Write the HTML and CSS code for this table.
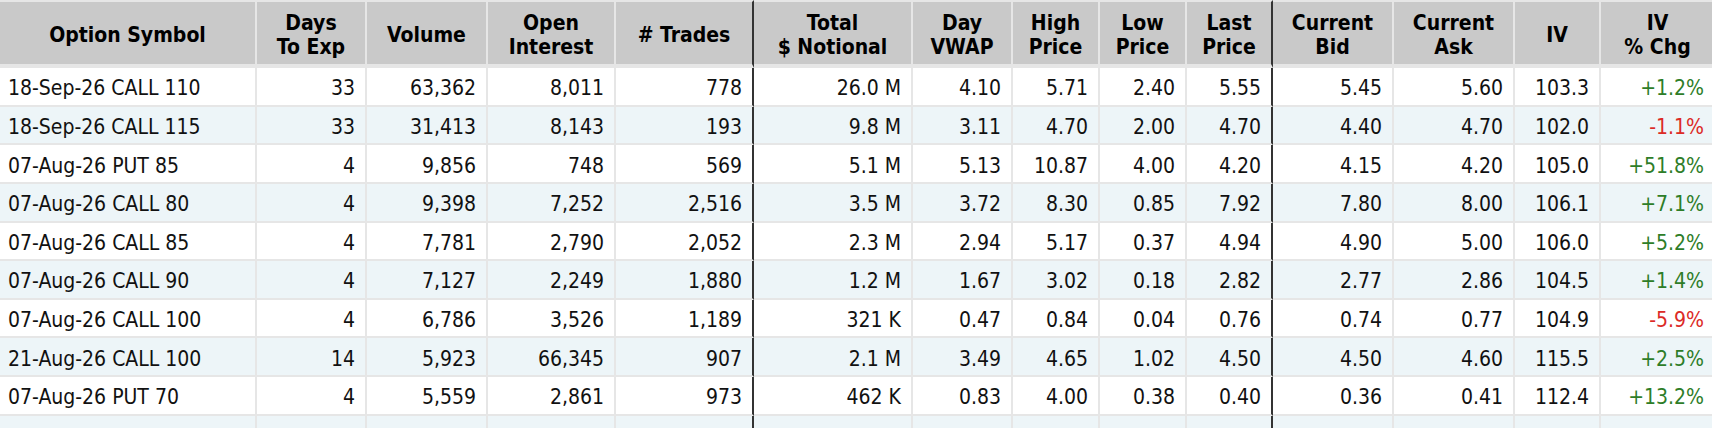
FILE: index.html
```html
<!DOCTYPE html>
<html lang="en">
<head>
<meta charset="utf-8">
<title>Options Activity</title>
<link rel="stylesheet" href="styles.css">
</head>
<body>
<table class="grid">
  <thead>
    <tr>
      <th class="c-sym">Option Symbol</th>
      <th class="c-days">Days<br>To Exp</th>
      <th class="c-vol">Volume</th>
      <th class="c-oi">Open<br>Interest</th>
      <th class="c-trades sep">#&nbsp;Trades</th>
      <th class="c-not">Total<br>$ Notional</th>
      <th class="c-vwap">Day<br>VWAP</th>
      <th class="c-high">High<br>Price</th>
      <th class="c-low">Low<br>Price</th>
      <th class="c-last sep">Last<br>Price</th>
      <th class="c-bid">Current<br>Bid</th>
      <th class="c-ask">Current<br>Ask</th>
      <th class="c-iv">IV</th>
      <th class="c-ivc">IV<br>% Chg</th>
    </tr>
  </thead>
  <tbody>
    <tr>
      <td class="sym">18-Sep-26 CALL 110</td><td>33</td><td>63,362</td><td>8,011</td><td class="sep">778</td><td>26.0 M</td><td>4.10</td><td>5.71</td><td>2.40</td><td class="sep">5.55</td><td>5.45</td><td>5.60</td><td>103.3</td><td class="up">+1.2%</td>
    </tr>
    <tr>
      <td class="sym">18-Sep-26 CALL 115</td><td>33</td><td>31,413</td><td>8,143</td><td class="sep">193</td><td>9.8 M</td><td>3.11</td><td>4.70</td><td>2.00</td><td class="sep">4.70</td><td>4.40</td><td>4.70</td><td>102.0</td><td class="down">-1.1%</td>
    </tr>
    <tr>
      <td class="sym">07-Aug-26 PUT 85</td><td>4</td><td>9,856</td><td>748</td><td class="sep">569</td><td>5.1 M</td><td>5.13</td><td>10.87</td><td>4.00</td><td class="sep">4.20</td><td>4.15</td><td>4.20</td><td>105.0</td><td class="up">+51.8%</td>
    </tr>
    <tr>
      <td class="sym">07-Aug-26 CALL 80</td><td>4</td><td>9,398</td><td>7,252</td><td class="sep">2,516</td><td>3.5 M</td><td>3.72</td><td>8.30</td><td>0.85</td><td class="sep">7.92</td><td>7.80</td><td>8.00</td><td>106.1</td><td class="up">+7.1%</td>
    </tr>
    <tr>
      <td class="sym">07-Aug-26 CALL 85</td><td>4</td><td>7,781</td><td>2,790</td><td class="sep">2,052</td><td>2.3 M</td><td>2.94</td><td>5.17</td><td>0.37</td><td class="sep">4.94</td><td>4.90</td><td>5.00</td><td>106.0</td><td class="up">+5.2%</td>
    </tr>
    <tr>
      <td class="sym">07-Aug-26 CALL 90</td><td>4</td><td>7,127</td><td>2,249</td><td class="sep">1,880</td><td>1.2 M</td><td>1.67</td><td>3.02</td><td>0.18</td><td class="sep">2.82</td><td>2.77</td><td>2.86</td><td>104.5</td><td class="up">+1.4%</td>
    </tr>
    <tr>
      <td class="sym">07-Aug-26 CALL 100</td><td>4</td><td>6,786</td><td>3,526</td><td class="sep">1,189</td><td>321 K</td><td>0.47</td><td>0.84</td><td>0.04</td><td class="sep">0.76</td><td>0.74</td><td>0.77</td><td>104.9</td><td class="down">-5.9%</td>
    </tr>
    <tr>
      <td class="sym">21-Aug-26 CALL 100</td><td>14</td><td>5,923</td><td>66,345</td><td class="sep">907</td><td>2.1 M</td><td>3.49</td><td>4.65</td><td>1.02</td><td class="sep">4.50</td><td>4.50</td><td>4.60</td><td>115.5</td><td class="up">+2.5%</td>
    </tr>
    <tr>
      <td class="sym">07-Aug-26 PUT 70</td><td>4</td><td>5,559</td><td>2,861</td><td class="sep">973</td><td>462 K</td><td>0.83</td><td>4.00</td><td>0.38</td><td class="sep">0.40</td><td>0.36</td><td>0.41</td><td>112.4</td><td class="up">+13.2%</td>
    </tr>
    <tr>
      <td class="sym">&nbsp;</td><td></td><td></td><td></td><td class="sep"></td><td></td><td></td><td></td><td></td><td class="sep"></td><td></td><td></td><td></td><td></td>
    </tr>
  </tbody>
</table>
</body>
</html>
```

FILE: styles.css
```css
*, *::before, *::after {
  box-sizing: border-box;
}

html, body {
  margin: 0;
  padding: 0;
  overflow: hidden;
  background: #ffffff;
}

.grid {
  width: 1716px;
  table-layout: fixed;
  border-collapse: separate;
  border-spacing: 0;
  font-family: "DejaVu Sans Condensed", "DejaVu Sans", Verdana, sans-serif;
  font-stretch: condensed;
  font-size: 21px;
  color: #111111;
}

.grid th,
.grid td {
  border-right: 2px solid #e6e6e6;
  border-bottom: 2px solid #e6e6e6;
  vertical-align: middle;
  white-space: nowrap;
  overflow: hidden;
}

.grid th {
  height: 68px;
  border-top: 2px solid #e6e6e6;
  border-bottom-width: 4px;
  padding: 4px 2px 0;
  background: #c9c9c9;
  font-weight: bold;
  line-height: 24px;
  text-align: center;
  color: #000000;
}

.grid td {
  height: 38.625px;
  padding: 4px 10px 0 8px;
  line-height: 24px;
  text-align: right;
}

.grid tbody tr:nth-child(odd) td {
  background: #ffffff;
}

.grid tbody tr:nth-child(even) td {
  background: #edf5f8;
}

.grid .sep {
  border-right-color: #333333;
}

.grid td.sym {
  text-align: left;
}

.grid td.up {
  color: #2e7d28;
}

.grid td.down {
  color: #dc2a26;
}

.c-sym { width: 257px; }
.c-days { width: 110px; }
.c-vol { width: 121px; }
.c-oi { width: 128px; }
.c-trades { width: 138px; }
.c-not { width: 159px; }
.c-vwap { width: 100px; }
.c-high { width: 87px; }
.c-low { width: 87px; }
.c-last { width: 86px; }
.c-bid { width: 121px; }
.c-ask { width: 121px; }
.c-iv { width: 86px; }
.c-ivc { width: 115px; }
```
